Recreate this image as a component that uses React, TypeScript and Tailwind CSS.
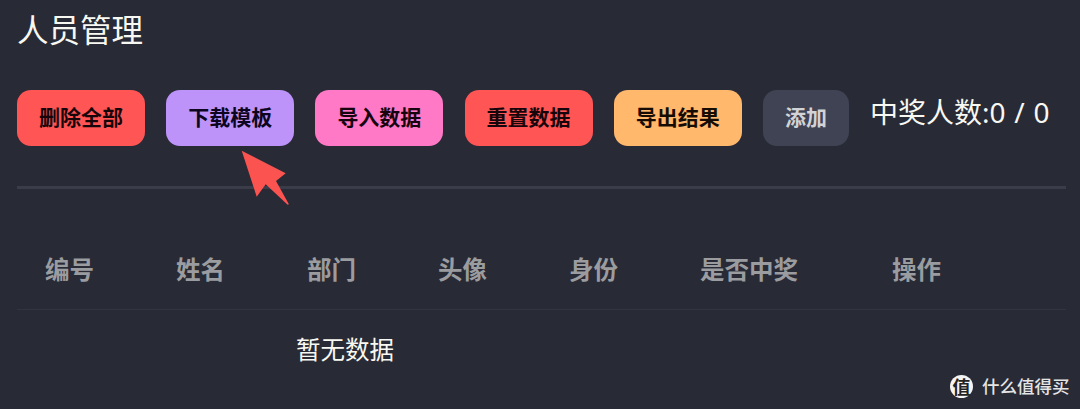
const actions = [
  { label: '删除全部', color: 'bg-[#ff5555] text-[#16050a]' },
  { label: '下载模板', color: 'bg-[#bd93f9] text-[#0d0620]' },
  { label: '导入数据', color: 'bg-[#ff79c6] text-[#16050f]' },
  { label: '重置数据', color: 'bg-[#ff5555] text-[#16050a]' },
  { label: '导出结果', color: 'bg-[#ffb86c] text-[#160c03]' },
]

const columns = ['编号', '姓名', '部门', '头像', '身份', '是否中奖', '操作']

function Arrow() {
  return (
    <svg className="absolute left-[240px] top-[149px]" width="52" height="58" viewBox="240 149 52 58">
      <path d="M241.7 150.7L285.7 173.3L276 181L288.9 204.2L287.6 204.8L265.7 184.3L256.7 196.7Z" fill="#fb5350" />
    </svg>
  )
}

function Watermark() {
  return (
    <div className="absolute left-[950px] top-[375px] flex items-center gap-[9px]">
      <span className="flex h-[23px] w-[23px] items-center justify-center rounded-full bg-[#f4f4f4] text-[18px] leading-none font-bold text-[#222]">
        值
      </span>
      <span className="text-[17.5px] leading-[23px] font-medium text-[#e4e4e4]">什么值得买</span>
    </div>
  )
}

export default function App() {
  return (
    <div className="relative h-[409px] w-[1080px] overflow-hidden bg-[#282a36] pl-[17px] pr-[14px] font-['Noto_Sans','Noto_Sans_CJK_SC',sans-serif] text-[#f8f8f2]">
      <h1 className="h-[90px] pt-[9px] text-[31.5px] leading-[42px] font-normal">人员管理</h1>

      <div className="flex h-[56px] items-start">
        <div className="flex gap-[21.2px]">
          {actions.map((a) => (
            <button key={a.label} className={`h-[56px] w-[128px] rounded-[14px] text-[21px] font-bold ${a.color}`}>
              {a.label}
            </button>
          ))}
          <button className="h-[56px] w-[86px] rounded-[14px] bg-[#3f4354] text-[21px] font-bold text-[#d2d3d6]">添加</button>
        </div>
        <span className="ml-[21px] text-[28px] leading-[44px] [word-spacing:1.5px]">中奖人数:0 / 0</span>
      </div>

      <div className="mt-[40px] h-[3px] bg-[#3a3c49]" />

      <div className="mt-[40px] flex h-[81px] items-center border-b border-[#32343f] pl-[28px] pt-[2px] text-[24.5px] font-bold text-[#9b9c9f]">
        {columns.map((c, i) => (
          <span key={c} className={i === 5 ? 'w-[192px]' : 'w-[131px]'}>
            {c}
          </span>
        ))}
      </div>

      <p className="pl-[279px] pt-[21px] text-[24.5px] leading-[38px]">暂无数据</p>

      <Arrow />
      <Watermark />
    </div>
  )
}
